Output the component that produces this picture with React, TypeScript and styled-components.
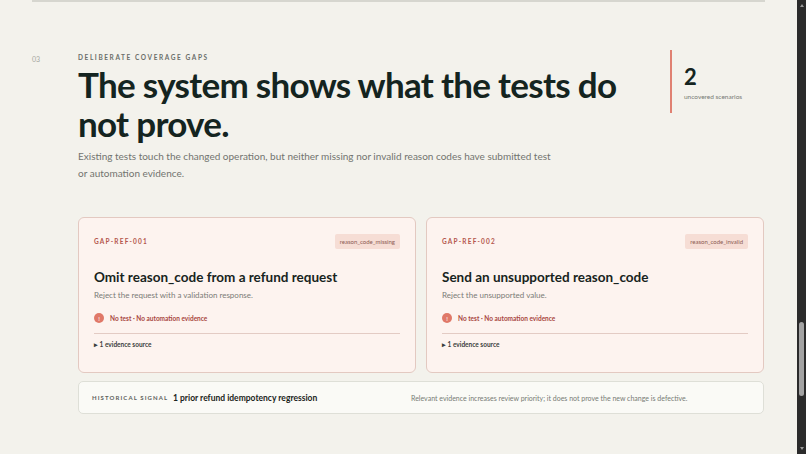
import React from "react";
import styled, { createGlobalStyle } from "styled-components";

const Global = createGlobalStyle`
  html, body { margin: 0; padding: 0; height: 100%; overflow: hidden; background: #f3f2ec; }
  body { font-family: Lato, "Noto Sans", sans-serif; color: #17231f; }
`;

const Frame = styled.div`display: flex; height: 454px; width: 806px;`;
const Main = styled.div`flex: 1; padding: 0 32px 0 32px; box-sizing: border-box;`;
const TopRule = styled.div`height: 2px; background: #d6d6cf;`;
const Scroll = styled.div`
  width: 9px; background: #2b2b2b; display: flex; flex-direction: column; align-items: center;
  padding: 4px 0; box-sizing: border-box; justify-content: space-between;
`;
const Arrow = styled.div<{ $up?: boolean }>`
  width: 0; height: 0; border-left: 2.5px solid transparent; border-right: 2.5px solid transparent;
  ${(p) => (p.$up ? "border-bottom: 3px solid #9a9a9a;" : "border-top: 3px solid #9a9a9a;")}
`;
const Track = styled.div`flex: 1; width: 100%; display: flex; flex-direction: column; align-items: center; padding-top: 315px;`;
const Thumb = styled.div`width: 5px; height: 74px; border-radius: 3px; background: #a3a3a3;`;

const Section = styled.div`display: grid; grid-template-columns: 46px 1fr; margin-top: 52px;`;
const Num = styled.div`font-size: 7px; color: #a6a8a2; padding-top: 1px;`;
const Body = styled.div`display: flex; flex-direction: column; width: 686px;`;
const HeadRow = styled.div`display: flex; justify-content: space-between;`;
const Eyebrow = styled.div`font-size: 6.5px; font-weight: 700; letter-spacing: 1.6px; color: #6a6e69; text-transform: uppercase;`;
const Title = styled.h1`
  margin: 4px 0 0; font-size: 35px; line-height: 39px; font-weight: 700; letter-spacing: -0.7px; color: #142420; width: 590px;
`;
const Lead = styled.p`margin: 5px 0 0; font-size: 10px; line-height: 16.5px; color: #72746f; width: 480px;`;
const Stat = styled.div`border-left: 2px solid #e08172; height: 63px; margin-top: -4px; padding-left: 12px; width: 94px; box-sizing: border-box;`;
const StatNum = styled.div`font-size: 22px; font-weight: 700; line-height: 26px; margin-top: 14px; color: #142420;`;
const StatLabel = styled.div`font-size: 6.5px; color: #777a75; margin-top: 3px;`;

const Cards = styled.div`display: grid; grid-template-columns: 1fr 1fr; gap: 10px; margin-top: 36px;`;
const Card = styled.div`
  background: #fdf3ef; border: 1px solid #e3c9c1; border-radius: 6px; padding: 16px 15px; height: 156px; box-sizing: border-box;
  display: flex; flex-direction: column;
`;
const CardTop = styled.div`display: flex; justify-content: space-between; align-items: center;`;
const GapId = styled.div`font-size: 6.5px; font-weight: 700; letter-spacing: 1.2px; color: #b4564d;`;
const Tag = styled.div`font-size: 6px; color: #8c5a52; background: #f6ddd5; padding: 4px 5px; border-radius: 2px;`;
const CardTitle = styled.div`font-size: 13.5px; font-weight: 700; margin-top: 20px; color: #172320;`;
const Desc = styled.div`font-size: 8px; color: #7b7b76; margin-top: 5px;`;
const Status = styled.div`display: flex; align-items: center; gap: 6px; margin-top: 13px; font-size: 6.5px; font-weight: 700; color: #a8463e;`;
const Dot = styled.span`
  width: 10px; height: 10px; border-radius: 50%; background: #e07868; color: #fde9e4; font-size: 6px; display: flex; align-items: center; justify-content: center;
`;
const Divider = styled.div`height: 1px; flex: none; background: #e3cbc4; margin-top: 10px;`;
const Evidence = styled.div`font-size: 6.5px; font-weight: 700; color: #3b403d; margin-top: 7px;`;

const Signal = styled.div`
  margin-top: 8px; height: 33px; box-sizing: border-box; background: #fafaf6; border: 1px solid #dedfd7; border-radius: 5px;
  display: grid; grid-template-columns: 81px 238px 1fr; align-items: center; padding: 0 13px;
`;
const SigLabel = styled.div`font-size: 6px; font-weight: 700; letter-spacing: 1.1px; color: #5e625d;`;
const SigTitle = styled.div`font-size: 8.5px; font-weight: 700; color: #1b2420;`;
const SigNote = styled.div`font-size: 7px; color: #777a75;`;

const gaps = [
  { id: "GAP-REF-001", tag: "reason_code_missing", title: "Omit reason_code from a refund request", desc: "Reject the request with a validation response." },
  { id: "GAP-REF-002", tag: "reason_code_invalid", title: "Send an unsupported reason_code", desc: "Reject the unsupported value." },
];

export default function App() {
  return (
    <Frame>
      <Global />
      <Main>
        <TopRule />
        <Section>
          <Num>03</Num>
          <Body>
            <HeadRow>
              <div>
                <Eyebrow>Deliberate coverage gaps</Eyebrow>
                <Title>The system shows what the tests do not prove.</Title>
                <Lead>Existing tests touch the changed operation, but neither missing nor invalid reason codes have submitted test or automation evidence.</Lead>
              </div>
              <Stat>
                <StatNum>2</StatNum>
                <StatLabel>uncovered scenarios</StatLabel>
              </Stat>
            </HeadRow>
            <Cards>
              {gaps.map((g) => (
                <Card key={g.id}>
                  <CardTop>
                    <GapId>{g.id}</GapId>
                    <Tag>{g.tag}</Tag>
                  </CardTop>
                  <CardTitle>{g.title}</CardTitle>
                  <Desc>{g.desc}</Desc>
                  <Status><Dot>!</Dot>No test · No automation evidence</Status>
                  <Divider />
                  <Evidence>▸ 1 evidence source</Evidence>
                </Card>
              ))}
            </Cards>
            <Signal>
              <SigLabel>HISTORICAL SIGNAL</SigLabel>
              <SigTitle>1 prior refund idempotency regression</SigTitle>
              <SigNote>Relevant evidence increases review priority; it does not prove the new change is defective.</SigNote>
            </Signal>
          </Body>
        </Section>
      </Main>
      <Scroll>
        <Arrow $up />
        <Track><Thumb /></Track>
        <Arrow />
      </Scroll>
    </Frame>
  );
}
